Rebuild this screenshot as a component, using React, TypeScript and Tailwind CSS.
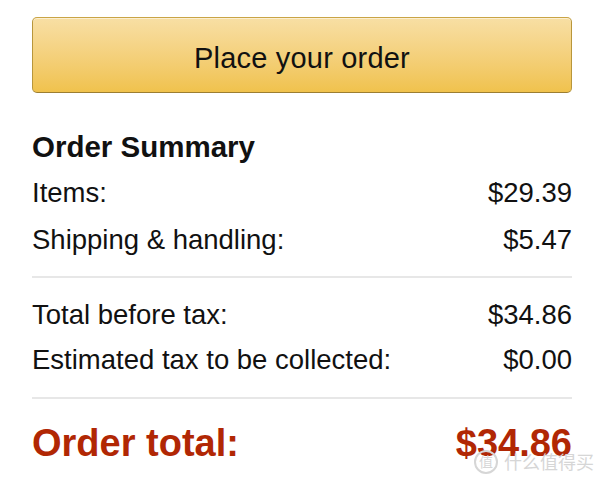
import React from "react"

// 주문 요약 행 데이터
const topRows = [
  { label: "Items:", value: "$29.39" },
  { label: "Shipping & handling:", value: "$5.47" },
]

const taxRows = [
  { label: "Total before tax:", value: "$34.86" },
  { label: "Estimated tax to be collected:", value: "$0.00" },
]

function Row({ label, value, tall }: { label: string; value: string; tall?: boolean }) {
  return (
    <div
      className={`flex items-center justify-between text-[27.5px] text-[#111] ${tall ? "h-[47px]" : "h-[45px]"}`}
    >
      <span>{label}</span>
      <span>{value}</span>
    </div>
  )
}

export default function App() {
  return (
    <div className="relative h-[481px] w-[600px] overflow-hidden bg-white font-['Liberation_Sans',Arial,sans-serif]">
      <div className="ml-[32px] w-[540px] pt-[17px]">
        {/* 주문 버튼 */}
        <button className="flex h-[76px] w-full items-center justify-center rounded-[5px] border border-t-[#c9a445] border-x-[#b8963b] border-b-[#9c7e31] bg-gradient-to-b from-[#f8dfa4] to-[#f0c24c] pt-[8px] text-[29px] tracking-[0.2px] text-[#111] shadow-[inset_0_1px_0_rgba(255,255,255,0.5)]">
          Place your order
        </button>

        <div className="mt-[32px] flex h-[44px] items-center text-[29.5px] font-bold text-[#111]">Order Summary</div>

        {topRows.map((row) => (
          <Row key={row.label} label={row.label} value={row.value} tall />
        ))}

        <div className="mt-[13px] mb-[14px] h-[2px] bg-[#e7e7e7]" />

        {taxRows.map((row) => (
          <Row key={row.label} label={row.label} value={row.value} />
        ))}

        <div className="mt-[15px] h-[2px] bg-[#e7e7e7]" />

        <div className="mt-[22px] flex h-[44px] items-center justify-between text-[38px] font-bold text-[#b12704]">
          <span>Order total:</span>
          <span>$34.86</span>
        </div>
      </div>

      {/* 워터마크 */}
      <div className="absolute bottom-[6px] right-[6px] flex items-center gap-[6px] text-[18px] text-[#d6d6d6] font-['Noto_Sans_CJK_SC',sans-serif]">
        <span className="flex h-[24px] w-[24px] items-center justify-center rounded-full border-2 border-[#d6d6d6] text-[14px]">值</span>
        <span>什么值得买</span>
      </div>
    </div>
  )
}
